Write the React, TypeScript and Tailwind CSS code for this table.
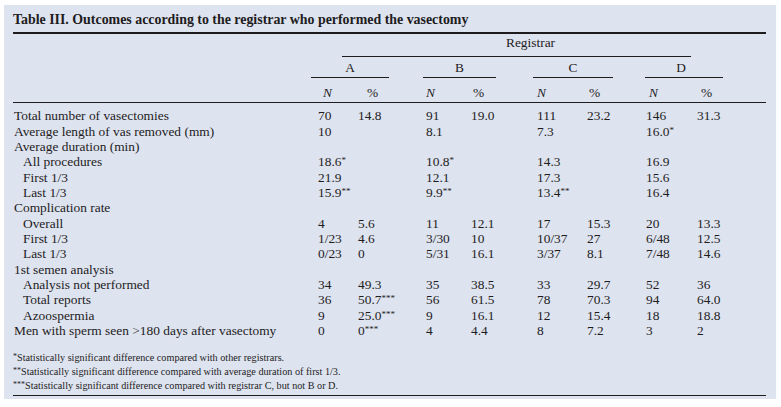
import React from "react";

type Row = { label: string; indent?: boolean; v?: string[] };

const rows: Row[] = [
  { label: "Total number of vasectomies", v: ["70", "14.8", "91", "19.0", "111", "23.2", "146", "31.3"] },
  { label: "Average length of vas removed (mm)", v: ["10", "", "8.1", "", "7.3", "", "16.0*", ""] },
  { label: "Average duration (min)" },
  { label: "All procedures", indent: true, v: ["18.6*", "", "10.8*", "", "14.3", "", "16.9", ""] },
  { label: "First 1/3", indent: true, v: ["21.9", "", "12.1", "", "17.3", "", "15.6", ""] },
  { label: "Last 1/3", indent: true, v: ["15.9**", "", "9.9**", "", "13.4**", "", "16.4", ""] },
  { label: "Complication rate" },
  { label: "Overall", indent: true, v: ["4", "5.6", "11", "12.1", "17", "15.3", "20", "13.3"] },
  { label: "First 1/3", indent: true, v: ["1/23", "4.6", "3/30", "10", "10/37", "27", "6/48", "12.5"] },
  { label: "Last 1/3", indent: true, v: ["0/23", "0", "5/31", "16.1", "3/37", "8.1", "7/48", "14.6"] },
  { label: "1st semen analysis" },
  { label: "Analysis not performed", indent: true, v: ["34", "49.3", "35", "38.5", "33", "29.7", "52", "36"] },
  { label: "Total reports", indent: true, v: ["36", "50.7***", "56", "61.5", "78", "70.3", "94", "64.0"] },
  { label: "Azoospermia", indent: true, v: ["9", "25.0***", "9", "16.1", "12", "15.4", "18", "18.8"] },
  { label: "Men with sperm seen >180 days after vasectomy", v: ["0", "0***", "4", "4.4", "8", "7.2", "3", "2"] },
];

function Val({ s }: { s: string }) {
  const m = s.match(/^([^*]*)(\*+)$/);
  if (!m) return <>{s}</>;
  return (
    <>
      {m[1]}
      <span className="relative top-[-3px] text-[9px] leading-none">{m[2]}</span>
    </>
  );
}

const cols =
  "grid grid-cols-[305px_40px_68px_45px_66px_50px_59px_51px_69px]";

export default function App() {
  return (
    <div className="w-[781px] h-[407px] bg-white pt-[5px] pl-[4px]">
      <div
        className="w-[772px] h-[394px] bg-[#dde3ef] pl-[9px] pr-[10px] pt-[7px] text-[#1e1c1d]"
        style={{ fontFamily: '"Liberation Serif", "Times New Roman", serif' }}
      >
        <div className="h-[16px] leading-[16px] text-[13.9px] font-bold whitespace-nowrap">
          Table III. Outcomes according to the registrar who performed the vasectomy
        </div>
        <div className="mt-[4px] h-[2px] bg-[#1e1c1d]" />
        {/* Registrar */}
        <div className={cols + " text-[13.4px]"}>
          <div />
          <div className="col-span-8">
            <div className="ml-[24px] w-[349px] h-[23px] box-border border-b border-[#1e1c1d] pt-[1px] leading-[15px] text-center pl-[28px]">
              Registrar
            </div>
          </div>
        </div>
        {/* A B C D */}
        <div className={cols + " text-[13.4px]"}>
          <div />
          <div className="col-span-2">
            <div className="ml-[-7px] w-[78px] h-[21px] box-border border-b border-[#1e1c1d] pt-[2.5px] leading-[15px] text-center">A</div>
          </div>
          <div className="col-span-2">
            <div className="ml-[-3px] w-[73px] h-[21px] box-border border-b border-[#1e1c1d] pt-[2.5px] leading-[15px] text-center">B</div>
          </div>
          <div className="col-span-2">
            <div className="ml-[-4px] w-[80px] h-[21px] box-border border-b border-[#1e1c1d] pt-[2.5px] leading-[15px] text-center">C</div>
          </div>
          <div className="col-span-2">
            <div className="ml-[-1px] w-[78px] h-[21px] box-border border-b border-[#1e1c1d] pt-[2.5px] leading-[15px] text-center pr-[6px]">D</div>
          </div>
        </div>
        {/* N % */}
        <div className={cols + " h-[25px] box-border border-b border-[#1e1c1d] pt-[6.5px] leading-[15px] text-[13.4px]"}>
          <div />
          <div className="italic pl-[5px]">N</div>
          <div className="pl-[9px]">%</div>
          <div className="italic pl-[0px]">N</div>
          <div className="pl-[2px]">%</div>
          <div className="italic">N</div>
          <div className="pl-[2px]">%</div>
          <div className="italic pl-[3px]">N</div>
          <div className="pl-[4px]">%</div>
        </div>
        {/* Body */}
        <div className={cols + " auto-rows-[15.35px] items-center pt-[5px] text-[13.4px] leading-[15px]"}>
          {rows.map((r, i) => (
            <React.Fragment key={i}>
              <div className={"whitespace-nowrap " + (r.indent ? "pl-[10px]" : "pl-[1px]")}>{r.label}</div>
              {Array.from({ length: 8 }).map((_, j) => (
                <div key={j} className="whitespace-nowrap">
                  {r.v && r.v[j] ? <Val s={r.v[j]} /> : null}
                </div>
              ))}
            </React.Fragment>
          ))}
        </div>
        {/* Footnotes */}
        <div className="mt-[13px] text-[10.2px] leading-[13px] whitespace-nowrap">
          <div>
            <span className="relative top-[-2px] text-[8px]">*</span>Statistically significant difference compared with other registrars.
          </div>
          <div>
            <span className="relative top-[-2px] text-[8px]">**</span>Statistically significant difference compared with average duration of first 1/3.
          </div>
          <div>
            <span className="relative top-[-2px] text-[8px]">***</span>Statistically significant difference compared with registrar C, but not B or D.
          </div>
        </div>
        <div className="mt-[1.5px] h-[1.5px] bg-[#1e1c1d]" />
      </div>
    </div>
  );
}
